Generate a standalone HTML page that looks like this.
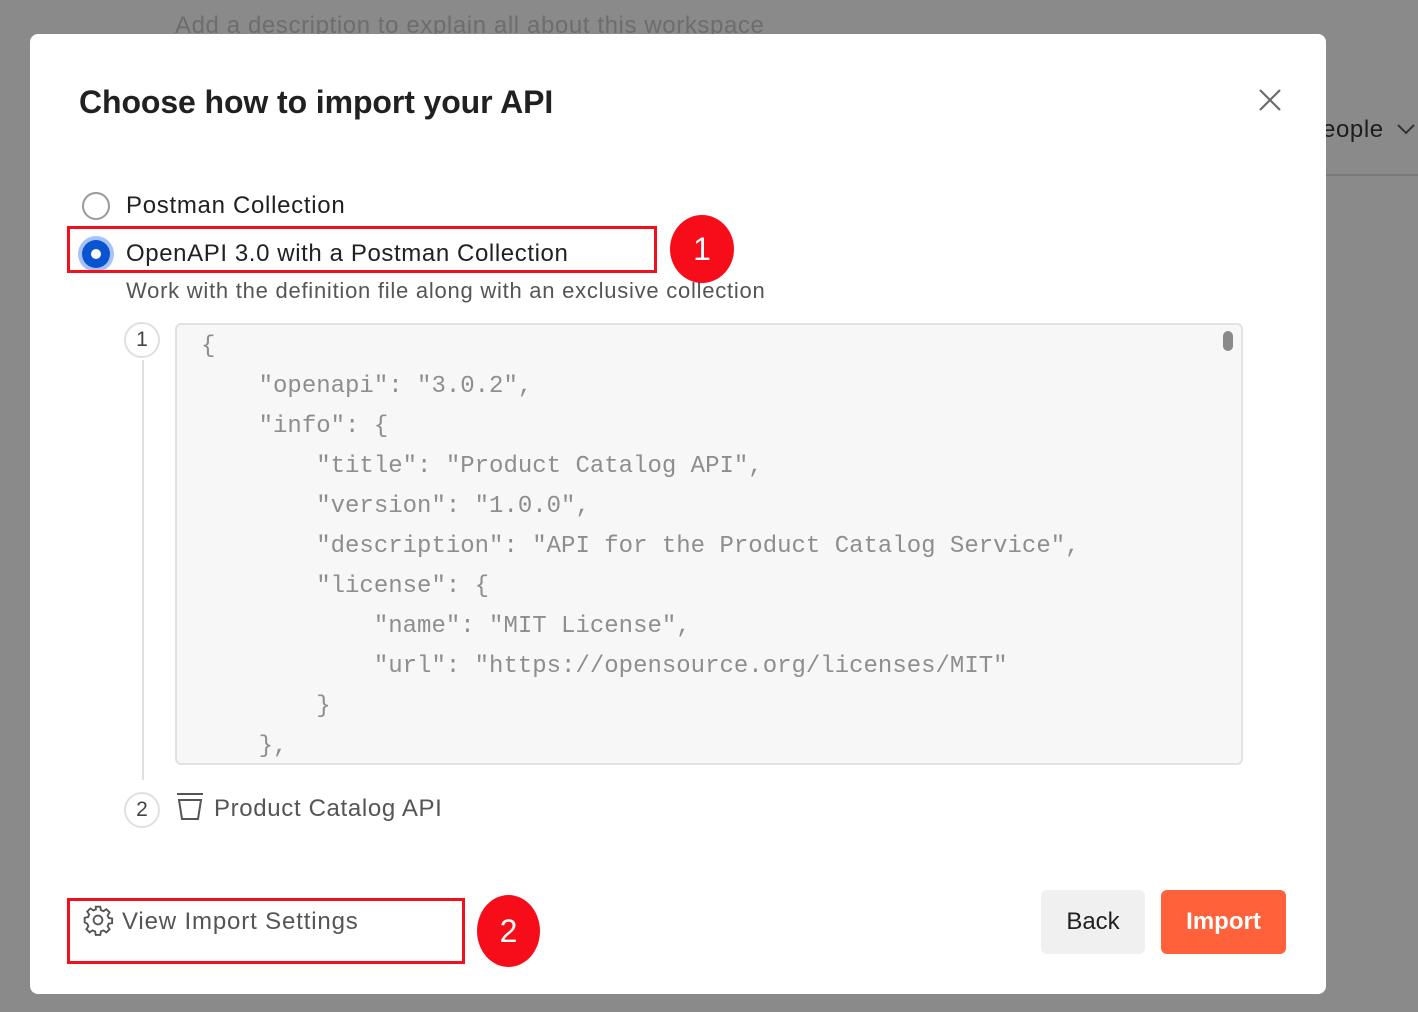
<!DOCTYPE html>
<html><head><meta charset="utf-8"><style>
*{margin:0;padding:0;box-sizing:border-box}
body{width:1418px;height:1012px;background:#8a8a8a;position:relative;overflow:hidden;font-family:"Liberation Sans",sans-serif}
.a{position:absolute;white-space:nowrap}
.modal{position:absolute;left:30px;top:34px;width:1296px;height:960px;background:#fff;border-radius:8px}
.code{position:absolute;left:175px;top:323px;width:1068px;height:442px;background:#f7f7f7;border:2px solid #e2e2e2;border-radius:6px;overflow:hidden}
.code pre{position:absolute;left:24px;top:2px;font-family:"Liberation Mono",monospace;font-size:24px;line-height:40px;color:#8e8e8e}
.step{position:absolute;width:36px;height:36px;border:2px solid #e0e0e0;border-radius:50%;background:#fff;font-size:21px;color:#444;text-align:center;line-height:32px}
.red{position:absolute;border:3px solid #f0101e}
.badge{position:absolute;background:#f70d1a;color:#fff;border-radius:50%;font-size:32px;text-align:center}
</style></head><body>
<div class="a" style="left:175px;top:12px;font-size:24px;color:#6d6d6d;letter-spacing:0.6px">Add a description to explain all about this workspace</div>
<div class="a" style="left:1322px;top:116px;font-size:24px;color:#1d1d1d;letter-spacing:0.6px">eople</div>
<svg class="a" style="left:1396px;top:122px" width="20" height="14"><path d="M2 3l8 8 8-8" stroke="#333" stroke-width="2" fill="none"/></svg>
<div class="a" style="left:1326px;top:174px;width:92px;height:2px;background:#7a7a7a"></div>
<div class="modal"></div>
<div class="a" style="left:79px;top:84px;font-size:32px;font-weight:bold;color:#212121;letter-spacing:-0.1px">Choose how to import your API</div>
<svg class="a" style="left:1258px;top:88px" width="24" height="24"><path d="M2 2l20 20M22 2L2 22" stroke="#6b6b6b" stroke-width="2.2"/></svg>
<div class="a" style="left:82px;top:192px;width:28px;height:28px;border:2px solid #9a9a9a;border-radius:50%"></div>
<div class="a" style="left:126px;top:192px;font-size:24px;color:#212121;letter-spacing:0.7px">Postman Collection</div>
<div class="a" style="left:78px;top:236px;width:36px;height:36px;border-radius:50%;background:#a6c2f7"></div>
<div class="a" style="left:82px;top:240px;width:28px;height:28px;border-radius:50%;background:#0b54d1"></div>
<div class="a" style="left:91px;top:249px;width:10px;height:10px;border-radius:50%;background:#fff"></div>
<div class="a" style="left:126px;top:240px;font-size:24px;color:#212121;letter-spacing:0.6px">OpenAPI 3.0 with a Postman Collection</div>
<div class="red" style="left:67px;top:226px;width:590px;height:47px"></div>
<div class="badge" style="left:670px;top:215px;width:64px;height:68px;line-height:68px">1</div>
<div class="a" style="left:126px;top:278px;font-size:22px;color:#555;letter-spacing:0.75px">Work with the definition file along with an exclusive collection</div>
<div class="a" style="left:142px;top:360px;width:2px;height:420px;background:#e0e0e0"></div>
<div class="step" style="left:124px;top:322px">1</div>
<div class="code"><pre>{
    "openapi": "3.0.2",
    "info": {
        "title": "Product Catalog API",
        "version": "1.0.0",
        "description": "API for the Product Catalog Service",
        "license": {
            "name": "MIT License",
            "url": "https://opensource.org/licenses/MIT"
        }
    },</pre>
<div style="position:absolute;right:8px;top:6px;width:10px;height:20px;border-radius:5px;background:#8a8a8a"></div></div>
<div class="step" style="left:124px;top:792px">2</div>
<svg class="a" style="left:176px;top:792px" width="30" height="30"><path d="M1 2h26M3 8h22l-3 19H6z" stroke="#555" stroke-width="2" fill="none"/></svg>
<div class="a" style="left:214px;top:795px;font-size:24px;color:#555;letter-spacing:0.65px">Product Catalog API</div>
<svg class="a" style="left:82px;top:904px" width="32" height="32" viewBox="0 0 24 24"><path d="M10.3 2h3.4l.5 2.6 1.9.8 2.2-1.5 2.4 2.4-1.5 2.2.8 1.9 2.6.5v3.4l-2.6.5-.8 1.9 1.5 2.2-2.4 2.4-2.2-1.5-1.9.8-.5 2.6h-3.4l-.5-2.6-1.9-.8-2.2 1.5-2.4-2.4 1.5-2.2-.8-1.9L2 13.7v-3.4l2.6-.5.8-1.9-1.5-2.2 2.4-2.4 2.2 1.5 1.9-.8z" stroke="#555" stroke-width="1.4" fill="none"/><circle cx="12" cy="12" r="3.3" stroke="#555" stroke-width="1.4" fill="none"/></svg>
<div class="a" style="left:122px;top:908px;font-size:24px;color:#555;letter-spacing:0.85px">View Import Settings</div>
<div class="red" style="left:67px;top:898px;width:398px;height:66px"></div>
<div class="badge" style="left:477px;top:895px;width:63px;height:72px;line-height:72px">2</div>
<div class="a" style="left:1041px;top:890px;width:104px;height:64px;background:#f0f0f0;border-radius:6px;font-size:24px;color:#212121;text-align:center;line-height:64px">Back</div>
<div class="a" style="left:1161px;top:890px;width:125px;height:64px;background:#ff613b;border-radius:6px;font-size:24px;font-weight:bold;color:#fff;text-align:center;line-height:64px">Import</div>
</body></html>
